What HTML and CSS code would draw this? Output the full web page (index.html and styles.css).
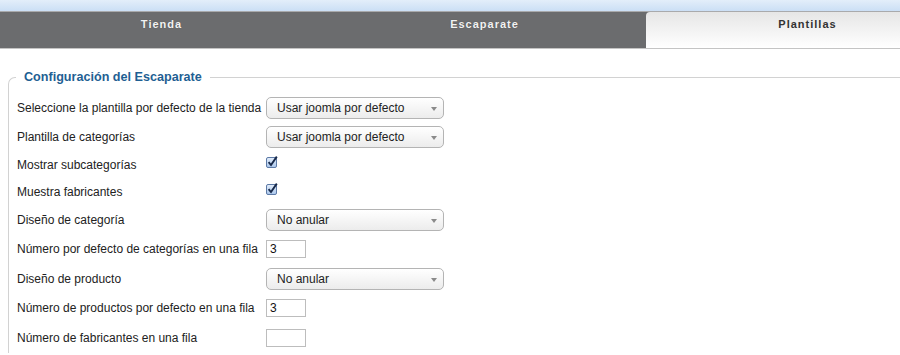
FILE: index.html
```html
<!DOCTYPE html>
<html lang="es">
<head>
    <meta charset="UTF-8">
    <title>Configuración del Escaparate</title>
    <link rel="stylesheet" href="styles.css">
</head>
<body>
    <div class="topstrip"></div>
    <div class="tabs">
        <div class="tab">Tienda</div>
        <div class="tab">Escaparate</div>
        <div class="tab active">Plantillas</div>
    </div>

    <fieldset class="panel">
        <legend>Configuración del Escaparate</legend>

        <div class="row field-select">
            <label>Seleccione la plantilla por defecto de la tienda</label>
            <span class="select">Usar joomla por defecto</span>
        </div>
        <div class="row field-select">
            <label>Plantilla de categorías</label>
            <span class="select">Usar joomla por defecto</span>
        </div>
        <div class="row field-check">
            <label>Mostrar subcategorías</label>
            <svg class="check" width="12" height="12" viewBox="0 0 12 12">
                <defs>
                    <linearGradient id="cb" x1="0" y1="0" x2="0" y2="1">
                        <stop offset="0" stop-color="#e4eefb"/>
                        <stop offset="1" stop-color="#a9c6ec"/>
                    </linearGradient>
                </defs>
                <rect x="0.5" y="1.5" width="10" height="10" rx="1.5" fill="url(#cb)" stroke="#5d7aa6"/>
                <path d="M2.6 6.2 L5 9 L10.8 0.6" fill="none" stroke="#17294a" stroke-width="1.9"/>
            </svg>
        </div>
        <div class="row field-check">
            <label>Muestra fabricantes</label>
            <svg class="check" width="12" height="12" viewBox="0 0 12 12">
                <rect x="0.5" y="1.5" width="10" height="10" rx="1.5" fill="url(#cb)" stroke="#5d7aa6"/>
                <path d="M2.6 6.2 L5 9 L10.8 0.6" fill="none" stroke="#17294a" stroke-width="1.9"/>
            </svg>
        </div>
        <div class="row field-select">
            <label>Diseño de categoría</label>
            <span class="select">No anular</span>
        </div>
        <div class="row field-text">
            <label>Número por defecto de categorías en una fila</label>
            <span class="textbox">3</span>
        </div>
        <div class="row field-select">
            <label>Diseño de producto</label>
            <span class="select">No anular</span>
        </div>
        <div class="row field-text">
            <label>Número de productos por defecto en una fila</label>
            <span class="textbox">3</span>
        </div>
        <div class="row field-text">
            <label>Número de fabricantes en una fila</label>
            <span class="textbox"></span>
        </div>
    </fieldset>
</body>
</html>
```

FILE: styles.css
```css
* {
    margin: 0;
    padding: 0;
    box-sizing: border-box;
}

body {
    font-family: "Liberation Sans", Arial, sans-serif;
    font-size: 12px;
    color: #222;
    background: #fff;
    overflow: hidden;
}

.topstrip {
    height: 11px;
    background: linear-gradient(#e3eefa, #cbdff5);
}

.tabs {
    display: flex;
    height: 38px;
    background: #6b6c6e;
    border-top: 1px solid #a9aaac;
    border-bottom: 1px solid #c4c4c4;
    overflow: hidden;
}

.tab {
    flex: 0 0 323px;
    text-align: center;
    padding-top: 6px;
    color: #f2f2f2;
    font-weight: bold;
    font-size: 11px;
    letter-spacing: 1px;
    text-shadow: 0 0 1px rgba(0,0,0,0.3);
}

.tab.active {
    color: #333;
    text-shadow: none;
    background: linear-gradient(#e6e6e6, #ffffff);
    border-top-left-radius: 4px;
}

.panel {
    margin: 21px 0 0 8px;
    border: 1px solid #d2d2d2;
    border-right: none;
    border-bottom: none;
    border-top-left-radius: 7px;
    padding: 9px 0 0 8px;
}

.panel legend {
    margin-left: -1px;
    padding: 0 8px;
    color: #1f5f93;
    font-weight: bold;
    font-size: 12.6px;
}

.row {
    display: flex;
    align-items: center;
}

.row label {
    width: 249px;
    flex: none;
}

.field-select {
    height: 29px;
}

.field-check {
    height: 27px;
}

.field-check .check {
    margin-top: -5px;
}

.field-text {
    height: 30px;
}

.select {
    position: relative;
    width: 178px;
    height: 22px;
    line-height: 20px;
    padding-left: 10px;
    border: 1px solid #b4b4b4;
    border-radius: 5px;
    background: linear-gradient(#ffffff, #ececec);
    color: #222;
}

.select::after {
    content: "";
    position: absolute;
    right: 6px;
    top: 9px;
    border-left: 3.5px solid transparent;
    border-right: 3.5px solid transparent;
    border-top: 4px solid #8a8a8a;
}

.textbox {
    width: 40px;
    height: 18px;
    line-height: 16px;
    padding-left: 3px;
    border: 1px solid #bdbdbd;
    background: #fff;
    color: #111;
}
```
